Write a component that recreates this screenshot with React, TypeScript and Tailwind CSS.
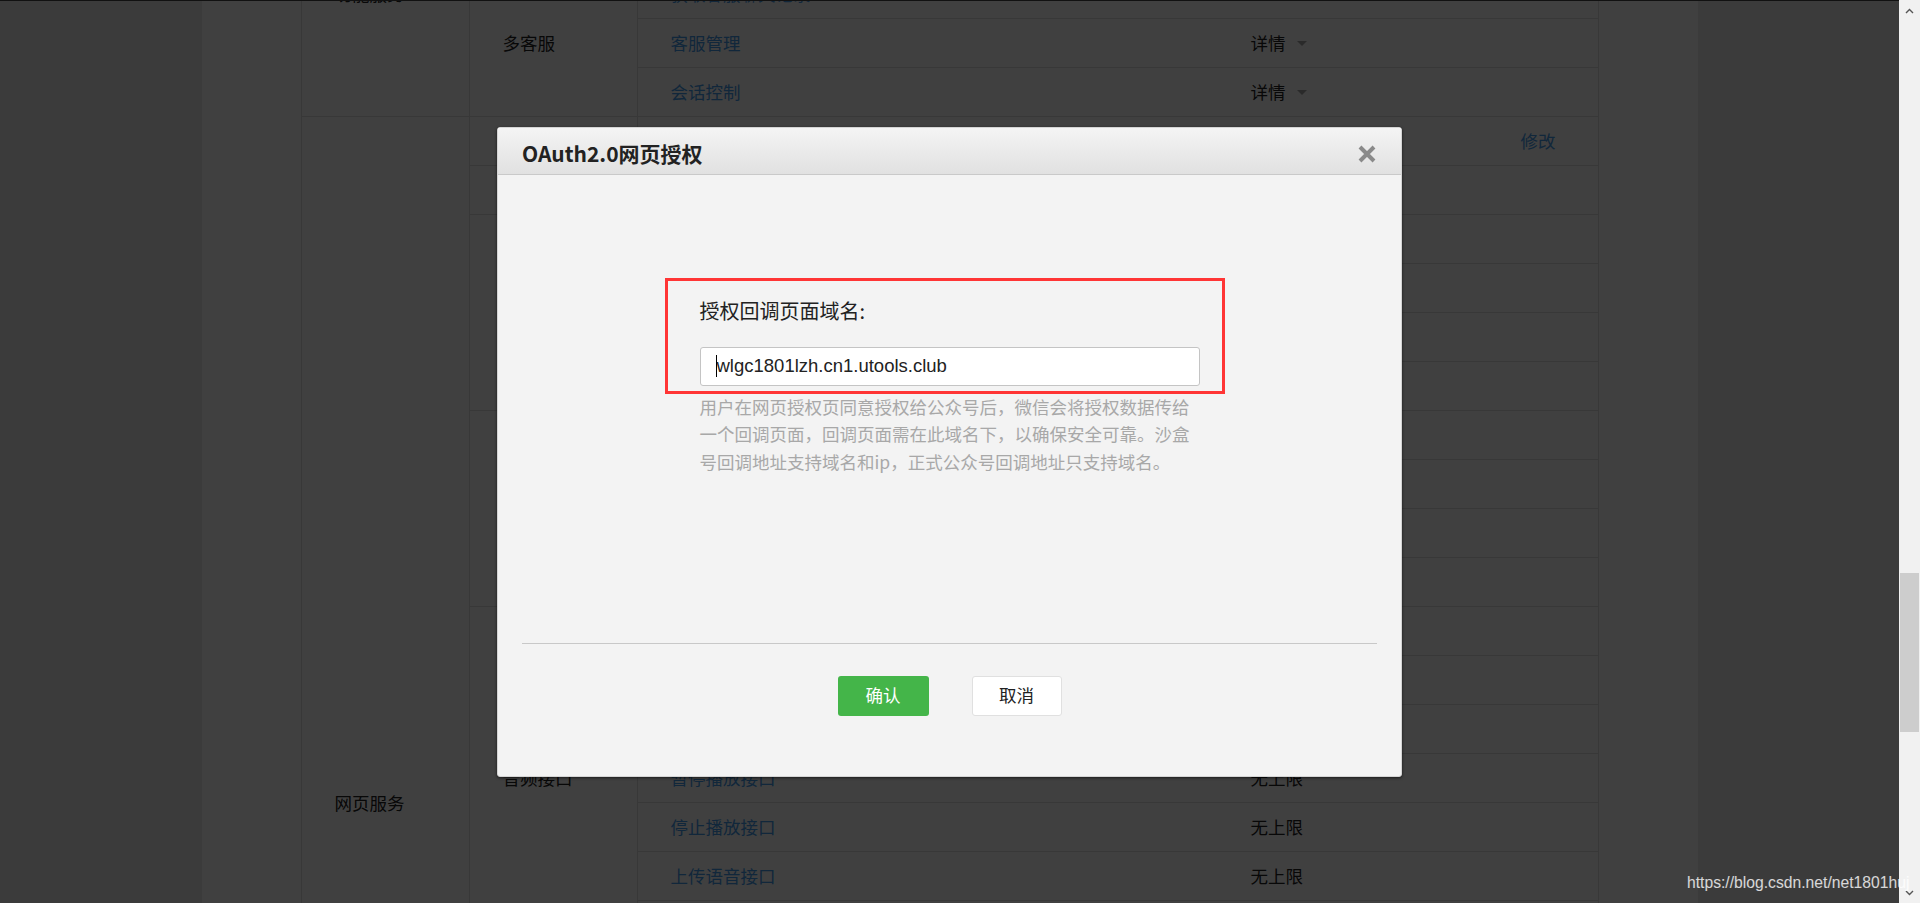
import React from "react";

type Row = { name: string; value: string; detail?: boolean; action?: string };

const rows: Row[] = [
  { name: "发送模板消息", value: "100000" },
  { name: "获取模板列表", value: "无上限" },
  { name: "获取客服聊天记录", value: "5000" },
  { name: "客服管理", value: "详情", detail: true },
  { name: "会话控制", value: "详情", detail: true },
  { name: "网页授权获取用户基本信息", value: "无上限", action: "修改" },
  { name: "判断当前客户端版本是否支持指定JS接口", value: "无上限" },
  { name: "获取“分享到朋友圈”按钮点击状态及自定义分享内容接口", value: "无上限" },
  { name: "获取“分享给朋友”按钮点击状态及自定义分享内容接口", value: "无上限" },
  { name: "获取“分享到QQ”按钮点击状态及自定义分享内容接口", value: "无上限" },
  { name: "获取“分享到腾讯微博”按钮点击状态及自定义分享内容接口", value: "无上限" },
  { name: "拍照或从手机相册中选图接口", value: "无上限" },
  { name: "预览图片接口", value: "无上限" },
  { name: "上传图片接口", value: "无上限" },
  { name: "下载图片接口", value: "无上限" },
  { name: "开始录音接口", value: "无上限" },
  { name: "停止录音接口", value: "无上限" },
  { name: "播放语音接口", value: "无上限" },
  { name: "暂停播放接口", value: "无上限" },
  { name: "停止播放接口", value: "无上限" },
  { name: "上传语音接口", value: "无上限" },
  { name: "下载语音接口", value: "无上限" },
  { name: "识别音频并返回识别结果接口", value: "无上限" },
];

const groups2: { label: string; h: string }[] = [
  { label: "模板消息", h: "h-[98px]" },
  { label: "多客服", h: "h-[147px]" },
  { label: "网页帐号", h: "h-[49px]" },
  { label: "基础接口", h: "h-[49px]" },
  { label: "分享接口", h: "h-[196px]" },
  { label: "图像接口", h: "h-[196px]" },
  { label: "音频接口", h: "h-[343px]" },
  { label: "智能接口", h: "h-[49px]" },
];

function Table() {
  return (
    <div className="-mt-[128px] flex shrink-0 border-x border-[#dedede] text-[17.5px] text-[#222]">
      <div className="w-[168px] shrink-0 border-r border-[#dedede]">
        <div className="flex h-[245px] items-center border-b border-[#dedede] pl-[33px]">功能服务</div>
        <div className="flex h-[1372px] items-center pl-[33px]">网页服务</div>
      </div>
      <div className="w-[168px] shrink-0 border-r border-[#dedede]">
        {groups2.map((g) => (
          <div key={g.label} className={`flex ${g.h} items-center border-b border-[#dedede] pl-[33px]`}>
            {g.label}
          </div>
        ))}
      </div>
      <div className="flex-1">
        {rows.map((r, i) => (
          <div key={i} className="flex h-[49px] items-center border-b border-[#dedede]">
            <div className="w-[613px] shrink-0 truncate pl-[33px] text-[#459ae9]">{r.name}</div>
            <div className="flex w-[250px] shrink-0 items-center">
              <span>{r.value}</span>
              {r.detail && (
                <span className="ml-[11px] h-0 w-0 border-x-[5px] border-t-[5px] border-x-transparent border-t-[#a8a8a8]" />
              )}
            </div>
            <div className="flex-1 pl-[20px] text-[#459ae9]">{r.action ?? ""}</div>
          </div>
        ))}
      </div>
    </div>
  );
}

function Modal() {
  return (
    <div className="flex h-[650px] w-[905px] flex-col rounded-[3px] border border-[#d4d4d4] bg-[#f3f3f3] shadow-[0_1px_3px_rgba(0,0,0,0.6)]">
      <div className="flex h-[47px] shrink-0 items-center justify-between border-b border-[#c9c9c9] bg-gradient-to-b from-[#f4f4f4] to-[#e1e1e1] px-[24px] pt-[6px]">
        <h3 className="text-[21px] font-bold leading-none text-[#222]">OAuth2.0网页授权</h3>
        <svg width="20" height="20" viewBox="0 0 20 20" aria-label="关闭">
          <path d="M3 3L17 17M17 3L3 17" stroke="#8a8a8a" strokeWidth="4" />
        </svg>
      </div>
      <div className="h-[468px] shrink-0 pt-[122px]">
        <div className="mx-auto w-[500px]">
          <div className="relative">
            <div className="pointer-events-none absolute -bottom-[8px] -left-[35px] -right-[25px] -top-[19px] border-[3px] border-[#ff3535]" />
            <label className="block text-[20px] leading-[28px] text-[#222]">授权回调页面域名:</label>
            <div className="relative mt-[22px] h-[39px] rounded-[3px] border border-[#c4c4c4] bg-white">
              <span className="absolute left-[15px] top-[7px] h-[22px] w-px bg-black" />
              <input
                readOnly
                value="wlgc1801lzh.cn1.utools.club"
                className="h-full w-full bg-transparent pl-[16px] font-['Liberation_Sans',sans-serif] text-[18.5px] text-[#222] outline-none"
              />
            </div>
          </div>
          <p className="mt-[7px] text-[17.5px] leading-[27.5px] text-[#a8a8a8]">
            <span className="block whitespace-nowrap">用户在网页授权页同意授权给公众号后，微信会将授权数据传给</span>
            <span className="block whitespace-nowrap">一个回调页面，回调页面需在此域名下，以确保安全可靠。沙盒</span>
            <span className="block whitespace-nowrap">号回调地址支持域名和ip，正式公众号回调地址只支持域名。</span>
          </p>
        </div>
      </div>
      <div className="mx-[24px] border-t border-[#c8c8c8]" />
      <div className="flex justify-center gap-[43px] pt-[32px]">
        <button className="h-[40px] w-[91px] rounded-[3px] bg-[#44b549] text-[17.5px] text-white">确认</button>
        <button className="h-[40px] w-[90px] rounded-[3px] border border-[#e0e0e0] bg-white text-[17.5px] text-[#222]">取消</button>
      </div>
    </div>
  );
}

function Scrollbar() {
  return (
    <div className="flex h-full w-[21px] shrink-0 flex-col bg-[#f1f1f1]">
      <div className="flex h-[21px] items-center justify-center">
        <svg width="9" height="6" viewBox="0 0 9 6">
          <path d="M1 5L4.5 1.5L8 5" stroke="#555" strokeWidth="1.4" fill="none" />
        </svg>
      </div>
      <div className="flex-1">
        <div className="mx-px mt-[552px] h-[159px] bg-[#cdcdcd]" />
      </div>
      <div className="flex h-[21px] items-center justify-center">
        <svg width="9" height="6" viewBox="0 0 9 6">
          <path d="M1 1L4.5 4.5L8 1" stroke="#555" strokeWidth="1.4" fill="none" />
        </svg>
      </div>
    </div>
  );
}

export default function App() {
  return (
    <div className="relative flex h-[903px] w-[1920px] overflow-hidden font-['Noto_Sans_CJK_SC',sans-serif]">
      <div className="relative h-full w-[1899px] shrink-0 overflow-hidden bg-[#ececec]">
        <div className="mx-auto flex h-full w-[1496px] flex-col bg-white px-[99px]">
          <Table />
        </div>
        <div className="absolute inset-0 bg-black/75" />
        <div className="absolute left-0 right-0 top-0 h-px bg-[#111]" />
        <div className="absolute inset-0 flex items-center justify-center">
          <Modal />
        </div>
      </div>
      <Scrollbar />
      <div className="absolute left-[1687px] top-[873px] whitespace-nowrap font-['Liberation_Sans',sans-serif] text-[15.7px] leading-[20px] text-white/80">
        https://blog.csdn.net/net1801huj
      </div>
    </div>
  );
}
